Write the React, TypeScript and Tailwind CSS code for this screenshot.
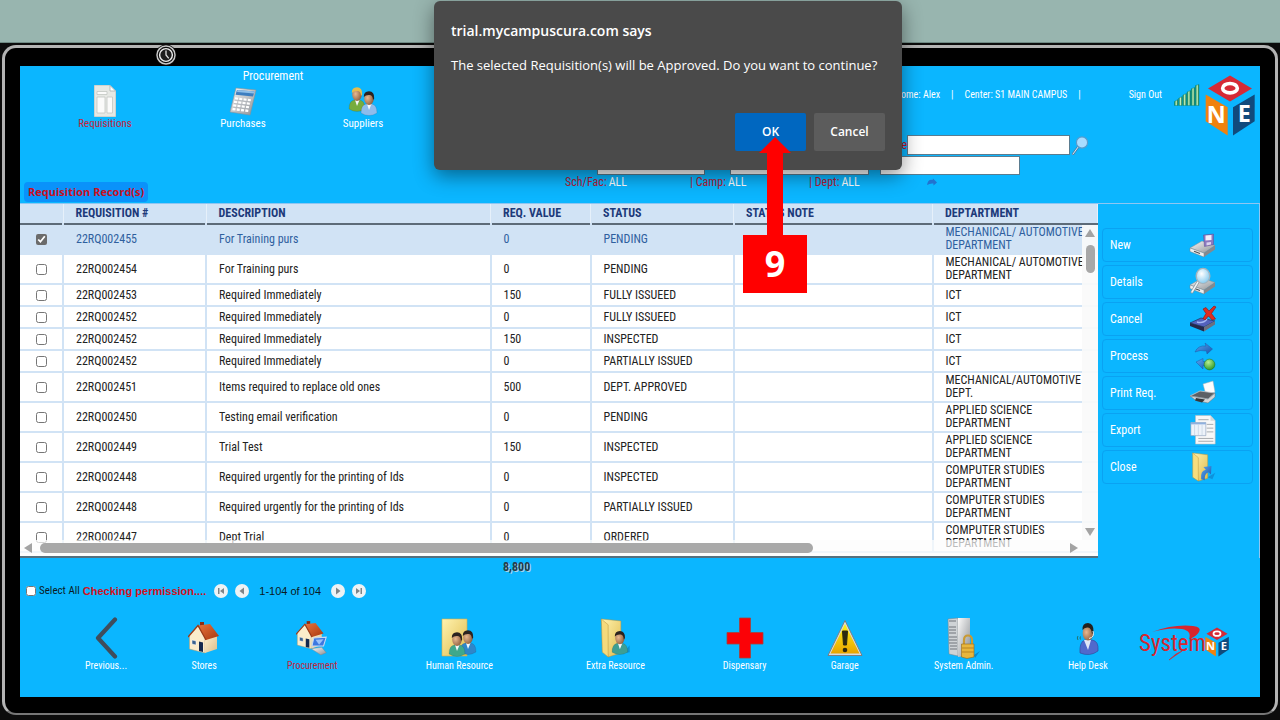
import { useState } from 'react';
import type { ReactNode } from 'react';

type Requisition = {
  no: string;
  description: string;
  value: string;
  status: string;
  department: string;
};

const REQUISITIONS: Requisition[] = [
  { no: '22RQ002455', description: 'For Training purs', value: '0', status: 'PENDING', department: 'MECHANICAL/ AUTOMOTIVE DEPARTMENT' },
  { no: '22RQ002454', description: 'For Training purs', value: '0', status: 'PENDING', department: 'MECHANICAL/ AUTOMOTIVE DEPARTMENT' },
  { no: '22RQ002453', description: 'Required Immediately', value: '150', status: 'FULLY ISSUEED', department: 'ICT' },
  { no: '22RQ002452', description: 'Required Immediately', value: '0', status: 'FULLY ISSUEED', department: 'ICT' },
  { no: '22RQ002452', description: 'Required Immediately', value: '150', status: 'INSPECTED', department: 'ICT' },
  { no: '22RQ002452', description: 'Required Immediately', value: '0', status: 'PARTIALLY ISSUED', department: 'ICT' },
  { no: '22RQ002451', description: 'Items required to replace old ones', value: '500', status: 'DEPT. APPROVED', department: 'MECHANICAL/AUTOMOTIVE DEPT.' },
  { no: '22RQ002450', description: 'Testing email verification', value: '0', status: 'PENDING', department: 'APPLIED SCIENCE DEPARTMENT' },
  { no: '22RQ002449', description: 'Trial Test', value: '150', status: 'INSPECTED', department: 'APPLIED SCIENCE DEPARTMENT' },
  { no: '22RQ002448', description: 'Required urgently for the printing of Ids', value: '0', status: 'INSPECTED', department: 'COMPUTER STUDIES DEPARTMENT' },
  { no: '22RQ002448', description: 'Required urgently for the printing of Ids', value: '0', status: 'PARTIALLY ISSUED', department: 'COMPUTER STUDIES DEPARTMENT' },
  { no: '22RQ002447', description: 'Dept Trial', value: '0', status: 'ORDERED', department: 'COMPUTER STUDIES DEPARTMENT' },
];

const COLUMNS = [
  { label: 'REQUISITION #', width: 'w-[143px]' },
  { label: 'DESCRIPTION', width: '' },
  { label: 'REQ. VALUE', width: 'w-[100px]' },
  { label: 'STATUS', width: 'w-[143px]' },
  { label: 'STATUS NOTE', width: 'w-[199px]' },
  { label: 'DEPTARTMENT', width: 'w-[165px]' },
];

/* ---------- Gradients shared by all icons ---------- */

function IconDefs() {
  return (
    <svg width="0" height="0" className="absolute" aria-hidden="true">
      <defs>
        <linearGradient id="folder" x1="0" y1="0" x2="1" y2="1">
          <stop offset="0" stopColor="#fff3b0" />
          <stop offset="1" stopColor="#e0bb4c" />
        </linearGradient>
        <linearGradient id="roof" x1="0" y1="0" x2="1" y2="1">
          <stop offset="0" stopColor="#e8743c" />
          <stop offset="1" stopColor="#a8380f" />
        </linearGradient>
        <linearGradient id="wall" x1="0" y1="0" x2="1" y2="1">
          <stop offset="0" stopColor="#fdf0d0" />
          <stop offset="1" stopColor="#d9bd8a" />
        </linearGradient>
        <linearGradient id="metal" x1="0" y1="0" x2="1" y2="1">
          <stop offset="0" stopColor="#fafafa" />
          <stop offset="1" stopColor="#8b8f94" />
        </linearGradient>
        <linearGradient id="warn" x1="0" y1="0" x2="0" y2="1">
          <stop offset="0" stopColor="#fff21a" />
          <stop offset="1" stopColor="#e8a400" />
        </linearGradient>
        <linearGradient id="blue" x1="0" y1="0" x2="1" y2="1">
          <stop offset="0" stopColor="#5aa8f0" />
          <stop offset="1" stopColor="#1552ae" />
        </linearGradient>
        <radialGradient id="green" cx="0.4" cy="0.3" r="0.8">
          <stop offset="0" stopColor="#b8f090" />
          <stop offset="1" stopColor="#1f8f1f" />
        </radialGradient>
        <radialGradient id="skin" cx="0.35" cy="0.45" r="0.8">
          <stop offset="0" stopColor="#e8b890" />
          <stop offset="1" stopColor="#7a4a2c" />
        </radialGradient>
        <radialGradient id="lens" cx="0.4" cy="0.35" r="0.7">
          <stop offset="0" stopColor="#ffffff" />
          <stop offset="1" stopColor="#7fc8ee" />
        </radialGradient>
        <linearGradient id="bars" x1="0" y1="0" x2="1" y2="0">
          <stop offset="0" stopColor="#0d7a3c" />
          <stop offset="0.5" stopColor="#c4f0c0" />
          <stop offset="1" stopColor="#0a6a34" />
        </linearGradient>
      </defs>
    </svg>
  );
}

/* Bust of a person, about 16 x 24 units with the origin at its top left */
function Person({ x, y, shirt, hair = '#2b2320' }: { x: number; y: number; shirt: string; hair?: string }) {
  return (
    <g transform={`translate(${x} ${y})`}>
      <path d="M0 22 Q0 14 5 13 L11 13 Q16 14 16 22 Q8 27 0 22Z" fill={shirt} stroke="#00000033" strokeWidth="0.5" />
      <path d="M6 13 L8 19 L10.5 13Z" fill="#f4f7fa" />
      <ellipse cx="8" cy="7.5" rx="4.8" ry="6.4" fill="url(#skin)" />
      <path d="M2.8 6 Q2.6 0.4 8 0.3 Q13.6 0.6 13.2 7.6 L12 9 Q11.8 4.6 9 4 Q5 3.4 2.8 6Z" fill={hair} />
    </g>
  );
}

function Svg({ box, className, children }: { box: string; className: string; children: ReactNode }) {
  return (
    <svg viewBox={box} className={className} aria-hidden="true">
      {children}
    </svg>
  );
}

function RequisitionIcon() {
  return (
    <Svg box="0 0 22 32" className="w-[22px] h-8">
      <path d="M0.5 0.5 H16 L21.5 6 V31.5 H0.5Z" fill="#e6e8e4" stroke="#cfd3cf" />
      <path d="M16 0.5 V6 H21.5Z" fill="#fff" stroke="#a9b0ae" strokeWidth="0.8" />
      <path d="M3 6.5 H13 V9.5 H3Z M3 12 H11 V28 H3Z M13 12 H18.5 V28 H13Z" fill="#fbfbfa" stroke="#c3c7c2" strokeWidth="0.8" />
    </Svg>
  );
}

function CalculatorIcon() {
  return (
    <Svg box="0 0 28 30" className="w-7 h-[30px]">
      <path d="M7 1 L27 3 L21 28 L1 25Z" fill="url(#metal)" stroke="#8a9299" strokeWidth="0.6" />
      <path d="M8 3 L25.5 4.6 L24 9.6 L6.5 7.8Z" fill="#3d7ec0" />
      <path d="M8.5 3 L25.5 4.6 L25 6.4 L8 5Z" fill="#8fc0ea" />
      <path d="M6 11.5 L23 13.5 M5 15 L22 17 M4.2 18.5 L21 20.5 M3.5 22 L20.4 24" stroke="#fff" strokeWidth="2.4" strokeDasharray="3 1.3" />
      <path d="M6 12.9 L22.6 14.9 M5 16.4 L21.8 18.4 M4.2 19.9 L20.8 21.9" stroke="#a4abb3" strokeWidth="0.6" />
    </Svg>
  );
}

function SuppliersIcon() {
  return (
    <Svg box="0 0 30 30" className="w-[30px] h-[30px]">
      <Person x={1} y={0} shirt="#77ac3e" hair="#e5bd4f" />
      <Person x={13} y={4} shirt="#8fbcec" />
    </Svg>
  );
}

function SignalIcon() {
  return (
    <Svg box="0 0 26 22" className="w-[26px] h-[22px]">
      {[0, 1, 2, 3, 4, 5].map((i) => (
        <path
          key={i}
          d={`M${i * 4.2 + 0.5} 21.5 V${17.5 - i * 3.2} L${i * 4.2 + 4} ${15.5 - i * 3} V21.5Z`}
          fill="url(#bars)"
          stroke="#0b7f6a"
          strokeWidth="0.4"
        />
      ))}
    </Svg>
  );
}

function CubeLogo({ className }: { className: string }) {
  return (
    <svg viewBox="0 0 150 182" className={className} role="img" aria-label="One">
      <path d="M75 1 L141 40 L75 79 L9 40Z" fill="#d62a36" />
      <ellipse cx="75" cy="39" rx="22" ry="14" fill="none" stroke="#fff" strokeWidth="11" />
      <path d="M2 58 L68 96 V181 L2 138Z" fill="#f0820f" />
      <path d="M84 96 L149 58 V138 L84 181Z" fill="#114a7c" />
      <text x="34" y="144" textAnchor="middle" fontSize="70" fontWeight="700" fill="#fff" fontFamily="Open Sans, sans-serif">N</text>
      <text x="118" y="142" textAnchor="middle" fontSize="70" fontWeight="700" fill="#fff" fontFamily="Open Sans, sans-serif">E</text>
    </svg>
  );
}

function SearchIcon() {
  return (
    <Svg box="0 0 17 19" className="w-[17px] h-[19px]">
      <path d="M6.5 10.5 L1 18" stroke="#4d7fa8" strokeWidth="2.4" strokeLinecap="round" />
      <path d="M6.5 10.5 L1 18" stroke="#d8e8f4" strokeWidth="1" strokeLinecap="round" />
      <circle cx="10" cy="6.5" r="5.6" fill="#a9dcff" stroke="#5a9ccc" strokeWidth="1.2" />
    </Svg>
  );
}

function RefreshIcon() {
  return (
    <Svg box="0 0 10 8" className="w-[10px] h-2">
      <path d="M0 7 Q1 1 5.5 2 L6 0.5 L10 4.5 L6.5 7.5 L6.4 5.5 Q3 5 0 7Z" fill="#2272cf" />
    </Svg>
  );
}

/* Flat disk drive used by several side panel icons */
function Drive() {
  return (
    <>
      <path d="M1 18 L13 11 L26 15.5 L15 23Z" fill="url(#metal)" stroke="#8a8e93" strokeWidth="0.5" />
      <path d="M1 18 L15 23 V27 L1 21.5Z" fill="#eceeef" stroke="#7b8085" strokeWidth="0.5" />
      <path d="M15 23 L26 15.5 V19.5 L15 27Z" fill="#85898e" />
      <path d="M5 21.3 L11 23.5" stroke="#4c5054" strokeWidth="1.1" />
    </>
  );
}

function NewIcon() {
  return (
    <Svg box="0 0 28 30" className="w-7 h-[30px]">
      <Drive />
      <path d="M14.5 5 L24.5 4 V14.500 L15.5 16.5Z" fill="#8d78bf" stroke="#5b4a92" strokeWidth="0.5" />
      <path d="M16.5 5.5 L22.5 5 V10 L16.5 10.5Z" fill="#f3effa" />
      <path d="M17.5 12.500 L22 12 V14.500 L17.500 15.5Z" fill="#dcd3ef" />
    </Svg>
  );
}

function DetailsIcon() {
  return (
    <Svg box="0 0 28 30" className="w-7 h-[30px]">
      <Drive />
      <path d="M9 15 L3 25" stroke="#8b959c" strokeWidth="3" strokeLinecap="round" />
      <path d="M9 15 L3 25" stroke="#eef3f6" strokeWidth="1.5" strokeLinecap="round" />
      <ellipse cx="14" cy="9" rx="6.8" ry="7.6" fill="url(#lens)" stroke="#a5b4bd" strokeWidth="1.4" />
    </Svg>
  );
}

function CancelIcon() {
  return (
    <Svg box="0 0 28 30" className="w-7 h-[30px]">
      <path d="M1 19 L12 14 L26 17 L15 23Z" fill="#5361bd" stroke="#1c2148" strokeWidth="0.6" />
      <path d="M1 19 L15 23 V27.5 L1 22Z" fill="#25284a" />
      <path d="M15 23 L26 17 V20.500 L15 27.5Z" fill="#6b6f80" />
      <path d="M8 18 Q14 20 18 15" stroke="#a4b6f4" strokeWidth="1.4" fill="none" />
      <path d="M14 5 L17 3.500 L20 7 L25 2 L27 3 L22.5 9.5 L26.500 15 L23 16 L19.500 12 L16 16 L14 14.500 L17 9.5Z" fill="#e02c20" stroke="#8f140e" strokeWidth="0.6" />
    </Svg>
  );
}

function ProcessIcon() {
  return (
    <Svg box="0 0 28 30" className="w-7 h-[30px]">
      <path d="M6 11 Q9 4 17 5 L16 2 L23.500 8 L18 13 L17.5 10 Q11 8.5 6 11Z" fill="url(#blue)" stroke="#1b58a8" strokeWidth="0.5" />
      <path d="M22 20 Q18 26 14 24.5 L14 28 L7 21 L14 17.5 V20.5 Q18 21 22 20Z" fill="url(#blue)" stroke="#1b58a8" strokeWidth="0.5" />
      <circle cx="20.5" cy="23.5" r="5.400" fill="url(#green)" stroke="#1d6f1d" strokeWidth="0.5" />
    </Svg>
  );
}

function PrintIcon() {
  return (
    <Svg box="0 0 28 30" className="w-7 h-[30px]">
      <path d="M14 6 L24 3 L26 14 L17 17Z" fill="#fdfdfd" stroke="#aab0b5" strokeWidth="0.5" />
      <path d="M1 18 L11 13 L26 15 L19 21Z" fill="#5c6065" stroke="#c4c8cb" strokeWidth="0.8" />
      <path d="M1 18 L19 21 L26 15 V19 L19 25 L7 22.500Z" fill="#d3d6d8" stroke="#6d7176" strokeWidth="0.5" />
      <path d="M7 20 L16 21.5 L13 24.500 L6 22.500Z" fill="#34373a" />
    </Svg>
  );
}

function ExportIcon() {
  return (
    <Svg box="0 0 28 32" className="w-7 h-[30px]">
      <path d="M6 0.5 H22 L27 6 V31 H6Z" fill="#f7f7f7" stroke="#b9bcbf" strokeWidth="0.6" />
      <path d="M22 0.5 V6 H27Z" fill="#d4d7d9" />
      <path d="M9 5 H20 M18 10 H25 M18 14 H25 M18 18 H25 M9 25 H25 M9 28 H25" stroke="#a3a7ab" />
      <path d="M1 8 H17 V22 H1Z" fill="#eef3fa" stroke="#8297b4" strokeWidth="0.6" />
      <path d="M1 8 H17 V10 H1Z" fill="#8fb0de" />
      <path d="M5 10.5 V22 M9 10.5 V22 M13 10.5 V22" stroke="#b7c7dc" strokeWidth="0.6" />
    </Svg>
  );
}

function CloseIcon() {
  return (
    <Svg box="0 0 28 32" className="w-7 h-[30px]">
      <path d="M3 1 L19 3 V28 L9 31Z" fill="url(#folder)" stroke="#b8933a" strokeWidth="0.5" />
      <path d="M3 1 L9 6 V31 L3 27Z" fill="#f7dd7e" stroke="#b8933a" strokeWidth="0.5" />
      <path d="M12 29 Q11 20 17 19 L14.5 16 L23 15 L22.5 24 L20 21.5 Q15 23 16 30Z" fill="url(#blue)" />
      <path d="M19 27 L27 22 L24 29Z" fill="#1170b8" opacity="0.5" />
    </Svg>
  );
}

function PreviousIcon() {
  return (
    <Svg box="0 0 26 42" className="w-[26px] h-[42px]">
      <path d="M22 2.5 L5 21 L22 39.5" fill="none" stroke="#3f4d5c" strokeWidth="4.2" strokeLinecap="round" strokeLinejoin="round" />
    </Svg>
  );
}

function House() {
  return (
    <>
      <path d="M1.5 14 L10 5 L17 16 V32 L1.5 28Z" fill="#fbeccb" stroke="#b99a68" strokeWidth="0.5" />
      <path d="M17 16 L29 14 V28 L17 32Z" fill="url(#wall)" />
      <path d="M12 1 H16 V6 H12Z" fill="#8c2d12" />
      <path d="M10 4.5 L22 3 L31 15 L18 19Z" fill="url(#roof)" />
      <path d="M0 16 L10 4.5 L18 19" fill="none" stroke="#9c3a18" strokeWidth="1.3" />
      <path d="M11 20.5 L15 21.5 V31 L11 30Z" fill="#14294e" />
      <path d="M4 19 L8 20 V24 L4 23Z" fill="#39608d" stroke="#fff" strokeWidth="0.5" />
    </>
  );
}

function StoresIcon() {
  return (
    <Svg box="0 0 32 34" className="w-8 h-[34px]">
      <House />
    </Svg>
  );
}

function ProcurementIcon() {
  return (
    <Svg box="0 0 36 40" className="w-8 h-9">
      <House />
      <path d="M20 20 L34 19 L31 29 L18 29Z" fill="#3d78e0" stroke="#c6d8f4" strokeWidth="1.2" />
      <path d="M22 22 L31 21.5 L26 27.500Z" fill="#9cc2fa" />
      <path d="M17 32 L29 30.500 L34 36.5 L28 39Z" fill="url(#metal)" stroke="#7b8289" strokeWidth="0.5" />
    </Svg>
  );
}

function HumanResourceIcon() {
  return (
    <Svg box="0 0 36 40" className="w-9 h-10">
      <path d="M1 1 H26 V38 H1Z" fill="url(#folder)" stroke="#d0ae4c" strokeWidth="0.6" />
      <Person x={19} y={12} shirt="#2f86c9" />
      <Person x={8} y={14} shirt="#3fa88c" />
    </Svg>
  );
}

function ExtraResourceIcon() {
  return (
    <Svg box="0 0 30 41" className="w-[30px] h-10">
      <path d="M1 1 L21 3 V36 L8 40Z" fill="url(#folder)" stroke="#b8933a" strokeWidth="0.5" />
      <path d="M1 1 L8 7 V40 L2 35Z" fill="#f5da7c" stroke="#b8933a" strokeWidth="0.5" />
      <path d="M24 36 L30 28 V35Z" fill="#0e6aa8" opacity="0.5" />
      <Person x={12} y={13} shirt="#3d9e93" />
    </Svg>
  );
}

function DispensaryIcon() {
  return (
    <Svg box="0 0 38 42" className="w-[38px] h-[42px]">
      <path d="M13.5 1 H24.5 V15.5 H37 V27 H24.5 V41 H13.5 V27 H1 V15.5 H13.5Z" fill="#fb0207" stroke="#a3413c" strokeWidth="0.8" />
    </Svg>
  );
}

function GarageIcon() {
  return (
    <Svg box="0 0 36 38" className="w-9 h-[38px]">
      <path d="M18 1.5 L35 36.5 H1Z" fill="#d9dcde" stroke="#7c7f82" strokeWidth="1" strokeLinejoin="round" />
      <path d="M18 5 L32.5 34.5 H3.5Z" fill="url(#warn)" />
      <path d="M15.5 12 H20.5 L19.5 26 H16.5Z" fill="#2c2910" stroke="#2c2910" strokeLinejoin="round" />
      <circle cx="18" cy="31" r="2.3" fill="#2c2910" />
    </Svg>
  );
}

function SystemAdminIcon() {
  return (
    <Svg box="0 0 33 42" className="w-[33px] h-[42px]">
      <path d="M1 2 L11 1 V39 L2 37Z" fill="#cfd3d6" stroke="#7b8086" strokeWidth="0.5" />
      <path d="M11 1 H23 V38 L11 40Z" fill="url(#metal)" />
      <path d="M2 4 H9 M2 10 H9 M2 13 H9 M2 16 H9 M2 20 H10 M2 23 H10 M2 26 H10 M3 29 H10 M3 32 H10" stroke="#70757b" strokeWidth="1.2" />
      <path d="M27 38 L33 34 L28 41Z" fill="#0e6aa8" opacity="0.6" />
      <path d="M17 27 V23 Q17 18.5 21 18.5 Q25 18.5 25 23 V27" fill="none" stroke="#c99a34" strokeWidth="2.2" />
      <path d="M14.5 27 H27 V40 L20 41.5 L14.5 40Z" fill="#e8b63c" stroke="#94691a" strokeWidth="0.6" />
      <path d="M15 31 H27 M15 35 H27" stroke="#b98420" />
    </Svg>
  );
}

function HelpDeskIcon() {
  return (
    <Svg box="0 0 24 33" className="w-6 h-[33px]">
      <path d="M4 31 Q3 20 9 18 H16 Q23 19 22 29 Q14 35 4 31Z" fill="#5069cc" stroke="#2f3c86" strokeWidth="0.5" />
      <path d="M8 18 L12 28 L15 18Z" fill="#dfe7f7" />
      <ellipse cx="12" cy="11" rx="5.4" ry="7.4" fill="url(#skin)" />
      <path d="M6.5 8 Q6 1 12 1 Q18 1.5 17.5 10 L16 12 Q15.5 6 12 5.5 Q8.5 5 6.5 8Z" fill="#24211f" />
      <path d="M17 9 Q19 15 13 16.5" fill="none" stroke="#e8eef2" />
      <path d="M2 14 Q0.5 16 2 18 M4.5 14.5 Q3.5 16 4.5 17.5" fill="none" stroke="#22736e" />
    </Svg>
  );
}

function SystemOneLogo() {
  return (
    <span className="flex items-center">
      <svg viewBox="0 0 70 42" className="w-[70px] h-[42px]" role="img" aria-label="System">
        <path d="M14 11 Q36 3 55 5 Q64 6 61 11 Q58 16 51 18 Q54 10 44 8 Q31 6 14 11Z" fill="#d8262f" />
        <text x="1" y="30" fontSize="23" fill="#d8262f" fontFamily="Roboto Condensed, sans-serif">System</text>
        <path d="M44 30 L31 39 L38 33Z" fill="#d8262f" stroke="#d8262f" strokeWidth="0.6" />
      </svg>
      <CubeLogo className="-ml-[3px] w-6 h-[30px]" />
    </span>
  );
}

/* ---------- Data for the bars ---------- */

const TOP_NAV = [
  { label: 'Requisitions', icon: <RequisitionIcon />, active: true, width: 'w-[138px]' },
  { label: 'Purchases', icon: <CalculatorIcon />, active: false, width: 'w-[138px]' },
  { label: 'Suppliers', icon: <SuppliersIcon />, active: false, width: 'w-[102px]' },
];

const ACTIONS = [
  { label: 'New', icon: <NewIcon /> },
  { label: 'Details', icon: <DetailsIcon /> },
  { label: 'Cancel', icon: <CancelIcon /> },
  { label: 'Process', icon: <ProcessIcon /> },
  { label: 'Print Req.', icon: <PrintIcon /> },
  { label: 'Export', icon: <ExportIcon /> },
  { label: 'Close', icon: <CloseIcon /> },
];

const MODULES = [
  { label: 'Previous...', icon: <PreviousIcon />, active: false },
  { label: 'Stores', icon: <StoresIcon />, active: false },
  { label: 'Procurement', icon: <ProcurementIcon />, active: true },
  { label: 'Human Resource', icon: <HumanResourceIcon />, active: false },
  { label: 'Extra Resource', icon: <ExtraResourceIcon />, active: false },
  { label: 'Dispensary', icon: <DispensaryIcon />, active: false },
  { label: 'Garage', icon: <GarageIcon />, active: false },
  { label: 'System Admin.', icon: <SystemAdminIcon />, active: false },
  { label: 'Help Desk', icon: <HelpDeskIcon />, active: false },
];

const FILTERS = [
  { id: 'sch', label: 'Sch/Fac:', width: 'w-[125px]' },
  { id: 'camp', label: '| Camp:', width: 'w-[119px]' },
  { id: 'dept', label: '| Dept:', width: 'w-[118px]' },
];

function Header() {
  return (
    <header className="flex justify-between h-[137px]">
      <div className="flex flex-col">
        <h1 className="w-[394px] pl-[112px] pt-[2px] text-center text-xs leading-4 text-white">Procurement</h1>
        <nav className="flex items-end h-[47px] pl-4">
          {TOP_NAV.map(({ label, icon, active, width }) => (
            <a key={label} href="#" className={`flex flex-col items-center justify-end text-[11px] leading-[14px] ${width} ${active ? 'text-[#c4233a]' : 'text-white'}`}>
              {icon}
              {label}
            </a>
          ))}
        </nav>
        <h2 className='mt-auto mb-px ml-1 px-1 self-start rounded bg-[#0a92fa] font-["Open_Sans",sans-serif] text-[11px] leading-5 font-bold text-[#c8101e]'>
          Requisition Record(s)
        </h2>
      </div>

      <div className="flex flex-col w-[696px]">
        <div className="flex justify-end items-start pt-[9px] pr-[5px] text-[10px] leading-4 text-white">
          <p className="flex gap-[11px] mt-3">
            <span>Welcome: Alex</span>
            <span>|</span>
            <span>Center: S1 MAIN CAMPUS</span>
            <span>|</span>
          </p>
          <a href="#" className="ml-12 mt-3">Sign Out</a>
          <span className="ml-3 mt-[9px]"><SignalIcon /></span>
          <span className="ml-[5px]"><CubeLogo className="w-[50px] h-[61px]" /></span>
        </div>
        <div className="flex items-center gap-1 -mt-px pr-[171px] justify-end">
          <label htmlFor="find" className="text-xs leading-4 text-[#c8101e]">Name</label>
          <input id="find" className="-ml-1 w-[163px] h-5 border border-[#5a7c90] bg-white px-1 text-xs" />
          <button type="button" aria-label="Search" className="-ml-[2px]"><SearchIcon /></button>
        </div>
        <div className="flex justify-end gap-[11px] mt-px pr-[240px]">
          <input aria-label="School or faculty" className="w-[108px] h-[19px] border border-[#5a7c90] bg-white" />
          <input aria-label="Campus" className="ml-[14px] w-[139px] h-[19px] border border-[#5a7c90] bg-white" />
          <input aria-label="Department" className="w-[140px] h-[19px] border border-[#5a7c90] bg-white" />
        </div>
        <div className="flex items-center pl-px">
          {FILTERS.map(({ id, label, width }) => (
            <p key={id} className={`flex gap-[2px] text-xs leading-[14px] ${width}`}>
              <span className="text-[#b01c38]">{label}</span>
              <span className="text-white">ALL</span>
            </p>
          ))}
          <button type="button" aria-label="Refresh"><RefreshIcon /></button>
        </div>
      </div>
    </header>
  );
}

function RequisitionTable() {
  const [selected, setSelected] = useState<number[]>([0]);

  const toggle = (i: number) =>
    setSelected(selected.includes(i) ? selected.filter((n) => n !== i) : [...selected, i]);

  return (
    <div className="relative flex-1 h-[354px] overflow-hidden border-b-2 border-[#56707e] bg-white">
      <table className="w-full table-fixed border-collapse text-left text-xs leading-[13px]">
        <thead>
          <tr className="h-5 bg-[#d1e3f5] text-[#1d3a7a]">
            <th className="w-[43px] border-r border-[#e6f0fa]" aria-label="Selected" />
            {COLUMNS.map(({ label, width }) => (
              <th key={label} className={`pl-3 border-r border-[#e6f0fa] font-bold ${width}`}>{label}</th>
            ))}
          </tr>
        </thead>
        <tbody className="border-t-2 border-[#5d6b78]">
          {REQUISITIONS.map((r, i) => (
            <tr
              key={i}
              className={`border-b-2 border-[#d1e3f5] ${r.department === 'ICT' ? 'h-[22px]' : 'h-[30px]'} ${selected.includes(i) ? 'bg-[#d1e3f5] text-[#2f5f9e]' : 'text-[#222222]'}`}
            >
              <td className="border-r-2 border-[#d1e3f5]">
                <input
                  type="checkbox"
                  aria-label={`Select ${r.no}`}
                  checked={selected.includes(i)}
                  onChange={() => toggle(i)}
                  className="block mx-auto w-[11px] h-[11px] accent-[#6b6b6b]"
                />
              </td>
              <td className="pl-3 border-r-2 border-[#d1e3f5]">{r.no}</td>
              <td className="pl-3 border-r-2 border-[#d1e3f5]">{r.description}</td>
              <td className="pl-3 border-r-2 border-[#d1e3f5]">{r.value}</td>
              <td className="pl-3 border-r-2 border-[#d1e3f5]">{r.status}</td>
              <td className="pl-3 border-r-2 border-[#d1e3f5]" />
              <td className="pl-3 pr-[12px]">{r.department}</td>
            </tr>
          ))}
        </tbody>
      </table>

      {/* Scrollbars float over the rows */}
      <div className="absolute right-0 top-[21px] bottom-4 flex flex-col items-center w-4 py-1 bg-[#fafafa]/90">
        <svg viewBox="0 0 10 8" className="w-[10px] h-2"><path d="M5 0 L10 8 H0Z" fill="#a3a3a3" /></svg>
        <div className="mt-2 w-[9px] h-7 rounded-full bg-[#a8a8a8]" />
        <svg viewBox="0 0 10 8" className="mt-auto w-[10px] h-2"><path d="M0 0 H10 L5 8Z" fill="#a3a3a3" /></svg>
      </div>
      <div className="absolute inset-x-0 bottom-0 flex items-center h-4 pl-1 bg-[#fcfcfc]/70">
        <svg viewBox="0 0 8 10" className="w-2 h-[10px]"><path d="M8 0 V10 L0 5Z" fill="#a3a3a3" /></svg>
        <div className="ml-2 w-[72%] h-[10px] rounded-full bg-[#a8a8a8]" />
        <svg viewBox="0 0 8 10" className="ml-auto mr-5 w-2 h-[10px]"><path d="M0 0 L8 5 L0 10Z" fill="#a3a3a3" /></svg>
      </div>
    </div>
  );
}

function SidePanel() {
  return (
    <aside className="flex flex-col gap-[3px] w-[161px] pt-6 pl-1 pr-[6px]">
      {ACTIONS.map(({ label, icon }) => (
        <button
          key={label}
          type="button"
          className="flex items-center justify-between h-[34px] pl-[7px] pr-[35px] rounded border border-[#0aa2f2] text-xs leading-4 text-white"
        >
          {label}
          {icon}
        </button>
      ))}
    </aside>
  );
}

function PageButton({ label, d }: { label: string; d: string }) {
  return (
    <button type="button" aria-label={label} className="flex items-center justify-center w-[14px] h-[14px] rounded-full bg-[#eef2f4]">
      <svg viewBox="0 0 10 10" className="w-[10px] h-[10px]">
        <path d={d} fill="#7d8488" />
      </svg>
    </button>
  );
}

function Footer() {
  return (
    <footer className="flex flex-col h-[139px]">
      <p className="pl-[483px] pt-px text-xs leading-4 font-bold text-[#263c4c] [text-shadow:1px_1px_0_#a9d4e8]">8,800</p>
      <div className='flex items-center mt-2 pl-[6px] text-[#0b1a24] font-["Liberation_Sans",sans-serif] text-[11px] leading-4'>
        <input id="all" type="checkbox" className="w-[10px] h-[10px]" />
        <label htmlFor="all" className='ml-[3px] font-["Roboto_Condensed",sans-serif]'>Select All</label>
        <b className="ml-[3px] text-[#d3101c]">Checking permission....</b>
        <div className="flex items-center gap-[7px] ml-2">
          <PageButton label="First page" d="M2 2 H3.5 V8 H2Z M8 2 V8 L4 5Z" />
          <PageButton label="Previous page" d="M7 1.5 V8.5 L2.5 5Z" />
        </div>
        <span className="mx-[10px]">1-104 of 104</span>
        <div className="flex items-center gap-[7px]">
          <PageButton label="Next page" d="M3 1.5 V8.5 L7.5 5Z" />
          <PageButton label="Last page" d="M6.5 2 H8 V8 H6.5Z M2 2 V8 L6 5Z" />
        </div>
      </div>
      <nav className="grid grid-cols-[98fr_98fr_118fr_176fr_136fr_122fr_78fr_160fr_88fr_128fr] mt-[18px] pl-[37px]">
        {MODULES.map(({ label, icon, active }) => (
          <a key={label} href="#" className={`flex flex-col items-center text-[10px] leading-[14px] whitespace-nowrap ${active ? 'text-[#c4233a]' : 'text-white'}`}>
            <span className="flex items-center justify-center h-[42px]">{icon}</span>
            {label}
          </a>
        ))}
        <a href="#" className="pl-[6px] pt-1"><SystemOneLogo /></a>
      </nav>
    </footer>
  );
}

function ConfirmDialog() {
  return (
    <div
      role="dialog"
      aria-labelledby="dialog-title"
      className='absolute left-[434px] top-px w-[468px] h-[169px] px-[17px] pt-5 rounded-md bg-[#4a4a4a] text-white shadow-[0_6px_20px_rgba(0,0,0,0.45)] font-["Open_Sans",sans-serif]'
    >
      <h2 id="dialog-title" className="text-sm leading-5 font-semibold">trial.mycampuscura.com says</h2>
      <p className="mt-[14px] text-[13px] leading-5 whitespace-nowrap">
        The selected Requisition(s) will be Approved. Do you want to continue?
      </p>
      <div className="flex justify-end gap-2 mt-[38px] text-xs font-semibold">
        <button type="button" className="w-[71px] h-[38px] rounded-xs bg-[#0067c0]">OK</button>
        <button type="button" className="w-[71px] h-[38px] rounded-xs bg-[#5c5c5c]">Cancel</button>
      </div>
    </div>
  );
}

function StepMarker() {
  return (
    <div className="absolute left-[743px] top-[137px] flex flex-col items-center w-16 pointer-events-none">
      <svg viewBox="0 0 32 98" className="w-8 h-[98px]" aria-hidden="true">
        <path d="M16 0 L32 16 H24 V98 H8 V16 H0Z" fill="#ff0000" />
      </svg>
      <span className='w-16 h-[58px] bg-[#ff0000] text-center text-4xl leading-[58px] font-bold text-white font-["Open_Sans",sans-serif]'>9</span>
    </div>
  );
}

export default function App() {
  return (
    <div className='relative min-h-screen bg-[#0c0c0c] font-["Roboto_Condensed",sans-serif]'>
      <IconDefs />
      <div className="h-[43px] bg-[#98b5af] border-b border-[#6f8a84]" />

      <div className="relative mx-[2px] mt-[2px] px-[15px] pt-[18px] pb-4 rounded-[14px] border-[3px] border-b-2 border-[#b4b4b4] border-b-[#777777] bg-black">
        <svg viewBox="0 0 20 20" className="absolute left-[150px] -top-[4px] w-[22px] h-[22px]" aria-hidden="true">
          <circle cx="10" cy="10" r="9.5" fill="#0c0c0c" />
          <circle cx="10" cy="10" r="8.2" fill="none" stroke="#c9c9c9" strokeWidth="1.3" />
          <circle cx="10" cy="10" r="5.8" fill="#1c1c1c" stroke="#ececec" strokeWidth="1.3" />
          <path d="M10 6 V10 L12.5 13" fill="none" stroke="#dddddd" strokeWidth="1.2" />
        </svg>

        <div className="bg-[#0bb6ff]">
          <Header />
          <main className="flex border-t border-r border-[#8fc6f2]">
            <RequisitionTable />
            <SidePanel />
          </main>
          <Footer />
        </div>
      </div>

      <ConfirmDialog />
      <StepMarker />
    </div>
  );
}
